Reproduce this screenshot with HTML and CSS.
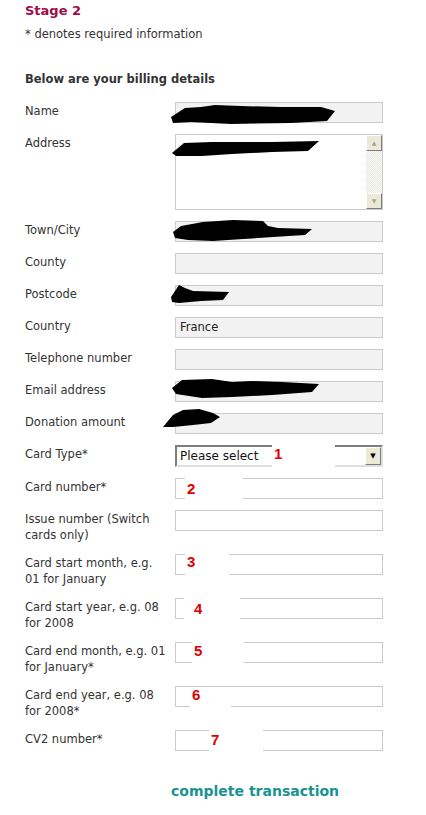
FILE: index.html
```html
<!DOCTYPE html>
<html lang="en">
<head>
  <meta charset="UTF-8" />
  <title>Stage 2 – Billing details</title>
  <link rel="stylesheet" href="styles.css">
</head>
<body>
  <div class="page">
    <h2 class="stage">Stage 2</h2>
    <p class="note">* denotes required information</p>

    <h3 class="section">Below are your billing details</h3>

    <form class="billing">
      <div class="row">
        <label>Name</label>
        <div class="field">
          <div class="input"></div>
          <svg class="blot" style="left:-4px;top:1px" width="165" height="22" viewBox="0 0 165 22"><path d="M0 14 L14 5 L30 4 L44 2 L70 3 L110 4 L150 4 L164 8 L156 18 L120 20 L60 21 L20 19 L2 20 Z"/></svg>
        </div>
      </div>

      <div class="row">
        <label>Address</label>
        <div class="field">
          <div class="textarea">
            <div class="ta-body"></div>
            <div class="scrollbar">
              <div class="sb-btn">&#9650;</div>
              <div class="sb-track"></div>
              <div class="sb-btn">&#9660;</div>
            </div>
          </div>
          <svg class="blot" style="left:-3px;top:5px" width="148" height="18" viewBox="0 0 148 18"><path d="M0 14 L12 4 L40 3 L100 3 L147 2 L136 12 L100 13 L60 15 L30 17 L4 17 Z"/></svg>
        </div>
      </div>

      <div class="row">
        <label>Town/City</label>
        <div class="field">
          <div class="input"></div>
          <svg class="blot" style="left:-2px;top:-1px" width="140" height="24" viewBox="0 0 140 24"><path d="M0 12 L8 6 L30 2 L60 0 L90 1 L95 6 L105 8 L139 9 L132 15 L100 17 L70 19 L40 21 L15 20 L2 18 Z"/></svg>
        </div>
      </div>

      <div class="row">
        <label>County</label>
        <div class="field"><div class="input"></div></div>
      </div>

      <div class="row">
        <label>Postcode</label>
        <div class="field">
          <div class="input"></div>
          <svg class="blot" style="left:-4px;top:-2px" width="60" height="22" viewBox="0 0 60 22"><path d="M0 14 L8 2 L14 5 L22 8 L58 9 L52 17 L30 18 L8 20 L1 19 Z"/></svg>
        </div>
      </div>

      <div class="row">
        <label>Country</label>
        <div class="field"><div class="input">France</div></div>
      </div>

      <div class="row">
        <label>Telephone number</label>
        <div class="field"><div class="input"></div></div>
      </div>

      <div class="row">
        <label>Email address</label>
        <div class="field">
          <div class="input"></div>
          <svg class="blot" style="left:-3px;top:-3px" width="148" height="24" viewBox="0 0 148 24"><path d="M0 10 L10 2 L40 1 L60 4 L80 3 L110 4 L147 6 L140 14 L100 17 L60 19 L30 20 L4 16 Z"/></svg>
        </div>
      </div>

      <div class="row">
        <label>Donation amount</label>
        <div class="field">
          <div class="input"></div>
          <svg class="blot" style="left:-12px;top:-4px" width="58" height="22" viewBox="0 0 58 22"><path d="M0 18 L10 6 L20 1 L36 0 L50 4 L57 8 L48 14 L30 16 L10 18 Z"/></svg>
        </div>
      </div>

      <div class="row">
        <label>Card Type*</label>
        <div class="field">
          <div class="select">
            <span class="select-text">Please select</span>
            <span class="select-btn">&#9660;</span>
          </div>
          <span class="patch" style="left:97px;width:63px;top:-1px;bottom:-1px"><b class="mark">1</b></span>
        </div>
      </div>

      <div class="row">
        <label>Card number*</label>
        <div class="field">
          <div class="input blank"></div>
          <span class="patch" style="left:10px;width:58px;top:-1px;bottom:-2px"><b class="mark" style="margin-top:4px">2</b></span>
        </div>
      </div>

      <div class="row">
        <label>Issue number (Switch cards only)</label>
        <div class="field"><div class="input blank"></div></div>
      </div>

      <div class="row">
        <label>Card start month, e.g. 01 for January</label>
        <div class="field">
          <div class="input blank"></div>
          <span class="patch" style="left:10px;width:44px;top:-1px;bottom:-4px"><b class="mark" style="margin-top:1px">3</b></span>
        </div>
      </div>

      <div class="row">
        <label>Card start year, e.g. 08 for 2008</label>
        <div class="field">
          <div class="input blank"></div>
          <span class="patch" style="left:9px;width:56px;top:-1px;bottom:-2px"><b class="mark" style="margin-left:10px;margin-top:4px">4</b></span>
        </div>
      </div>

      <div class="row">
        <label>Card end month, e.g. 01 for January*</label>
        <div class="field">
          <div class="input blank"></div>
          <span class="patch" style="left:17px;width:52px;top:-1px;bottom:-2px"><b class="mark" style="margin-top:2px">5</b></span>
        </div>
      </div>

      <div class="row">
        <label>Card end year, e.g. 08 for 2008*</label>
        <div class="field">
          <div class="input blank"></div>
          <span class="patch" style="left:15px;width:41px;top:1px;bottom:-12px"><b class="mark" style="margin-top:0">6</b></span>
        </div>
      </div>

      <div class="row">
        <label>CV2 number*</label>
        <div class="field">
          <div class="input blank"></div>
          <span class="patch" style="left:34px;width:54px;top:-1px;bottom:-6px"><b class="mark" style="margin-top:3px">7</b></span>
        </div>
      </div>

      <div class="actions">
        <a href="#" class="submit">complete transaction</a>
      </div>
    </form>
  </div>
</body>
</html>
```

FILE: styles.css
```css
body {
  margin: 0;
  padding: 0;
  background: #fff;
  color: #333;
  font-family: 'DejaVu Sans', sans-serif;
  font-size: 11.5px;
}
.page {
  padding: 2px 0 0 25px;
  width: 358px;
}
.stage {
  margin: 0;
  font-size: 13px;
  line-height: 18px;
  color: #9e0b4a;
}
.note {
  margin: 6px 0 0;
  line-height: 16px;
}
.section {
  margin: 29px 0 0;
  font-size: 11.5px;
  line-height: 16px;
}
.billing {
  margin-top: 15px;
  display: flex;
  flex-direction: column;
  gap: 11px;
}
.row {
  display: grid;
  grid-template-columns: 150px 208px;
  align-items: start;
}
.row label {
  line-height: 16px;
  padding: 1px 8px 0 0;
}
.field {
  position: relative;
}
.input {
  box-sizing: border-box;
  height: 21px;
  border: 1px solid #cbcbcb;
  background: #f2f2f2;
  padding: 0 4px;
  line-height: 19px;
  color: #222;
}
.input.blank {
  background: #fff;
}
.textarea {
  box-sizing: border-box;
  height: 76px;
  border: 1px solid #cbcbcb;
  background: #fff;
  display: flex;
}
.ta-body {
  flex: 1;
}
.scrollbar {
  width: 16px;
  display: flex;
  flex-direction: column;
  background: repeating-conic-gradient(#fff 0 25%, #e8e6dc 0 50%) 0 0 / 2px 2px;
}
.sb-btn {
  height: 16px;
  box-sizing: border-box;
  background: #ece9d8;
  border: 1px solid;
  border-color: #fff #7f7d72 #7f7d72 #fff;
  color: #a7a396;
  font-size: 6px;
  line-height: 14px;
  text-align: center;
}
.sb-track {
  flex: 1;
}
.select {
  box-sizing: border-box;
  height: 22px;
  border: 2px solid;
  border-color: #7d7d7d #e0e0e0 #e0e0e0 #7d7d7d;
  background: #fff;
  display: flex;
  align-items: stretch;
  color: #111;
}
.select-text {
  flex: 1;
  padding-left: 3px;
  line-height: 18px;
  font-size: 12px;
}
.select-btn {
  width: 16px;
  box-sizing: border-box;
  background: #ece9d8;
  border: 1px solid;
  border-color: #fff #7f7d72 #7f7d72 #fff;
  font-size: 7px;
  line-height: 16px;
  text-align: center;
  color: #000;
}
.patch {
  position: absolute;
  background: #fff;
}
.mark {
  display: block;
  margin: 2px 0 0 2px;
  color: #e00000;
  font-family: 'Liberation Sans', sans-serif;
  font-size: 15px;
  line-height: 16px;
  font-weight: bold;
}
.blot {
  position: absolute;
  fill: #000;
}
.actions {
  margin-top: 21px;
  padding-left: 146px;
}
.submit {
  color: #1a9392;
  font-weight: bold;
  font-size: 14px;
  text-decoration: none;
}
```
